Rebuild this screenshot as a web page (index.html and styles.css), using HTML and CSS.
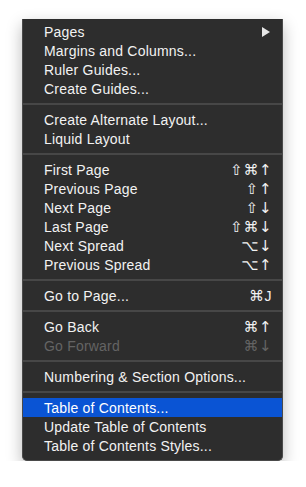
FILE: index.html
```html
<!DOCTYPE html>
<html lang="en">
	<head>
		<meta charset="UTF-8" />
		<meta name="viewport" content="width=device-width, initial-scale=1.0" />
		<title>Layout menu</title>
		<link rel="stylesheet" href="styles.css">
	</head>
	<body>
		<div class="menu">
			<div class="item">
				<span class="label">Pages</span>
				<svg class="submenu" width="8" height="10" viewBox="0 0 8 10"><polygon points="0,0 8,5 0,10" fill="#e6e6e6"/></svg>
			</div>
			<div class="item"><span class="label">Margins and Columns...</span></div>
			<div class="item"><span class="label">Ruler Guides...</span></div>
			<div class="item"><span class="label">Create Guides...</span></div>
			<div class="separator"></div>
			<div class="item"><span class="label">Create Alternate Layout...</span></div>
			<div class="item"><span class="label">Liquid Layout</span></div>
			<div class="separator"></div>
			<div class="item"><span class="label">First Page</span><span class="keys">⇧⌘↑</span></div>
			<div class="item"><span class="label">Previous Page</span><span class="keys">⇧↑</span></div>
			<div class="item"><span class="label">Next Page</span><span class="keys">⇧↓</span></div>
			<div class="item"><span class="label">Last Page</span><span class="keys">⇧⌘↓</span></div>
			<div class="item"><span class="label">Next Spread</span><span class="keys">⌥↓</span></div>
			<div class="item"><span class="label">Previous Spread</span><span class="keys">⌥↑</span></div>
			<div class="separator"></div>
			<div class="item"><span class="label">Go to Page...</span><span class="keys">⌘<span class="letter">J</span></span></div>
			<div class="separator"></div>
			<div class="item"><span class="label">Go Back</span><span class="keys">⌘↑</span></div>
			<div class="item disabled"><span class="label">Go Forward</span><span class="keys">⌘↓</span></div>
			<div class="separator"></div>
			<div class="item"><span class="label">Numbering &amp; Section Options...</span></div>
			<div class="separator"></div>
			<div class="item selected"><span class="label">Table of Contents...</span></div>
			<div class="item"><span class="label">Update Table of Contents</span></div>
			<div class="item"><span class="label">Table of Contents Styles...</span></div>
		</div>
	</body>
</html>
```

FILE: styles.css
```css
/* Dark context menu */
body {
	margin: 0;
	padding: 19px 0 0 22px;
	background-color: #fff;
	font-family: "Liberation Sans", Arial, sans-serif;
}
.menu {
	width: 259px;
	padding: 3px 0 5px;
	background-color: #2d2d2d;
	border: 1px solid #4a4a4a;
	border-top: none;
	border-radius: 0 0 5px 5px;
	box-shadow: 0 6px 16px rgba(0, 0, 0, 0.28);
}
.item {
	display: flex;
	align-items: center;
	justify-content: space-between;
	height: 19px;
	padding: 0 10px 0 21px;
	color: #f2f2f2;
	font-size: 14px;
	letter-spacing: 0.2px;
}
.item.selected {
	background-color: #0a54d4;
	color: #fff;
}
.item.disabled {
	color: #646464;
}
.keys {
	font-family: "DejaVu Sans", sans-serif;
	font-size: 15px;
	letter-spacing: 0.5px;
}
.keys .letter {
	font-family: "Liberation Sans", Arial, sans-serif;
	font-size: 14px;
}
.submenu {
	margin-right: 2px;
}
.separator {
	height: 2px;
	margin: 5px 0;
	background-color: #474747;
}
```
